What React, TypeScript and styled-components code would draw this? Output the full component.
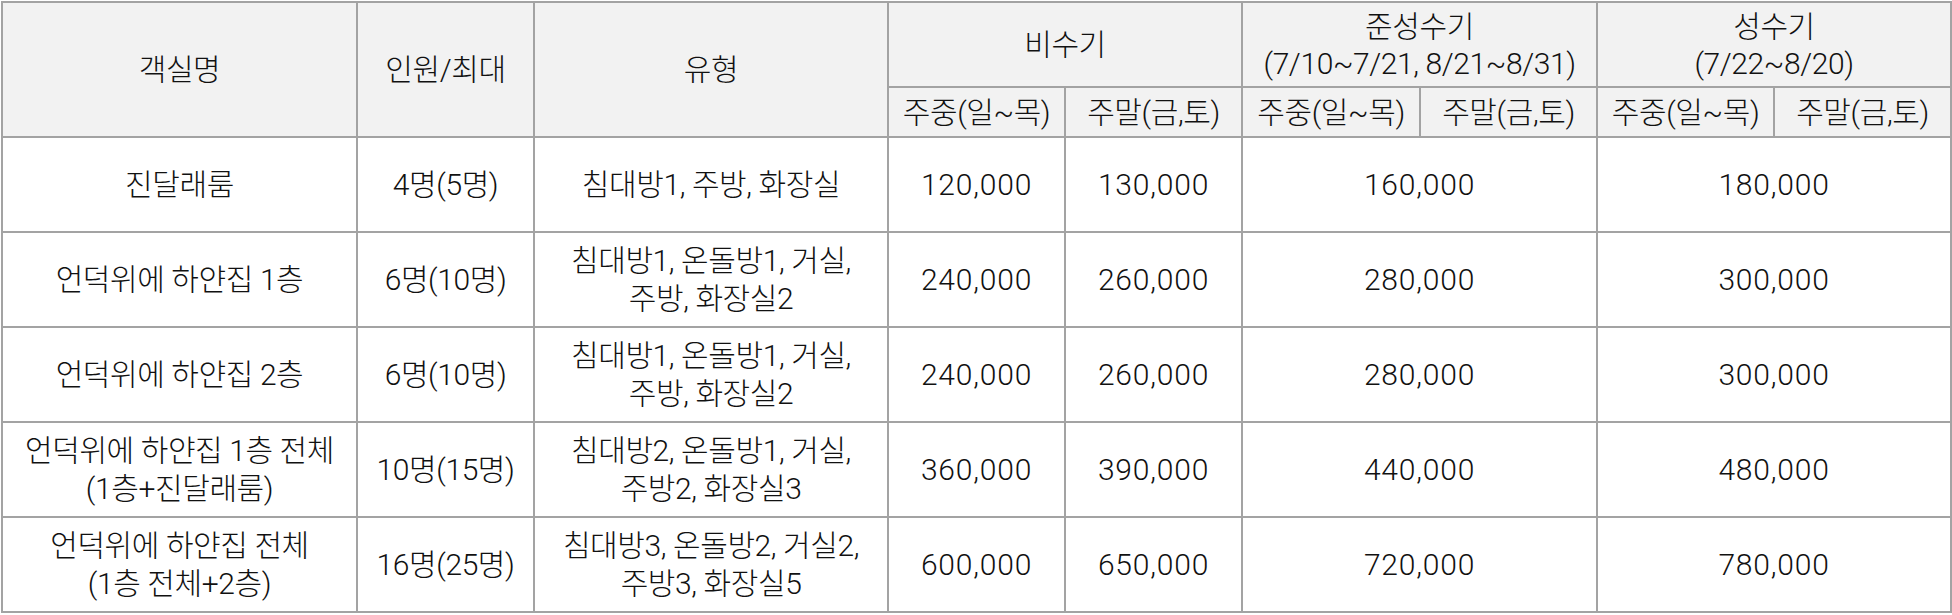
import React from 'react';
import styled, { createGlobalStyle } from 'styled-components';

const GlobalStyle = createGlobalStyle`
	html, body {
		margin: 0;
		padding: 0;
		background: #ffffff;
	}
	body {
		font-family: Roboto, 'Noto Sans CJK KR', 'Noto Sans', sans-serif;
		color: #111111;
	}
`;

interface Room {
	name: string[];
	people: string;
	type: string[];
	offWeekday: string;
	offWeekend: string;
	mid: string;
	peak: string;
}

const rooms: Room[] = [
	{
		name: ['진달래룸'],
		people: '4명(5명)',
		type: ['침대방1, 주방, 화장실'],
		offWeekday: '120,000',
		offWeekend: '130,000',
		mid: '160,000',
		peak: '180,000',
	},
	{
		name: ['언덕위에 하얀집 1층'],
		people: '6명(10명)',
		type: ['침대방1, 온돌방1, 거실,', '주방, 화장실2'],
		offWeekday: '240,000',
		offWeekend: '260,000',
		mid: '280,000',
		peak: '300,000',
	},
	{
		name: ['언덕위에 하얀집 2층'],
		people: '6명(10명)',
		type: ['침대방1, 온돌방1, 거실,', '주방, 화장실2'],
		offWeekday: '240,000',
		offWeekend: '260,000',
		mid: '280,000',
		peak: '300,000',
	},
	{
		name: ['언덕위에 하얀집 1층 전체', '(1층+진달래룸)'],
		people: '10명(15명)',
		type: ['침대방2, 온돌방1, 거실,', '주방2, 화장실3'],
		offWeekday: '360,000',
		offWeekend: '390,000',
		mid: '440,000',
		peak: '480,000',
	},
	{
		name: ['언덕위에 하얀집 전체', '(1층 전체+2층)'],
		people: '16명(25명)',
		type: ['침대방3, 온돌방2, 거실2,', '주방3, 화장실5'],
		offWeekday: '600,000',
		offWeekend: '650,000',
		mid: '720,000',
		peak: '780,000',
	},
];

const colWidths = [355, 177, 354, 177, 177, 178, 177, 177, 177];

const Lines = ({ lines }: { lines: string[] }) => (
	<>
		{lines.map((line, i) => (
			<React.Fragment key={i}>
				{i > 0 && <br />}
				{line}
			</React.Fragment>
		))}
	</>
);

const App = () => {
	return (
		<Page>
			<GlobalStyle />
			<PriceTable>
				<colgroup>
					{colWidths.map((w, i) => (
						<col key={i} style={{ width: w }} />
					))}
				</colgroup>
				<thead>
					<HeadRow height={85}>
						<HeadCell rowSpan={2}>객실명</HeadCell>
						<HeadCell rowSpan={2}>인원/최대</HeadCell>
						<HeadCell rowSpan={2}>유형</HeadCell>
						<HeadCell colSpan={2}>비수기</HeadCell>
						<HeadCell colSpan={2}>
							준성수기
							<br />
							(7/10~7/21, 8/21~8/31)
						</HeadCell>
						<HeadCell colSpan={2}>
							성수기
							<br />
							(7/22~8/20)
						</HeadCell>
					</HeadRow>
					<HeadRow height={50}>
						{[0, 1, 2].map((i) => (
							<React.Fragment key={i}>
								<HeadCell>주중(일~목)</HeadCell>
								<HeadCell>주말(금,토)</HeadCell>
							</React.Fragment>
						))}
					</HeadRow>
				</thead>
				<tbody>
					{rooms.map((room) => (
						<BodyRow key={room.name.join('')}>
							<BodyCell>
								<Lines lines={room.name} />
							</BodyCell>
							<BodyCell>{room.people}</BodyCell>
							<BodyCell>
								<Lines lines={room.type} />
							</BodyCell>
							<BodyCell price>{room.offWeekday}</BodyCell>
							<BodyCell price>{room.offWeekend}</BodyCell>
							<BodyCell price colSpan={2}>
								{room.mid}
							</BodyCell>
							<BodyCell price colSpan={2}>
								{room.peak}
							</BodyCell>
						</BodyRow>
					))}
				</tbody>
			</PriceTable>
		</Page>
	);
};

const Page = styled.div`
	padding: 1px 0 0 1px;
	width: 1952px;
	box-sizing: border-box;
`;

const PriceTable = styled.table`
	width: 1950px;
	table-layout: fixed;
	border-collapse: collapse;
	font-size: 30px;
	font-weight: 300;
	letter-spacing: -0.4px;
	line-height: 38px;
	text-align: center;
`;

const HeadRow = styled.tr<{ height: number }>`
	height: ${({ height }) => height}px;
`;

const HeadCell = styled.th`
	background: #f2f2f2;
	border: 2px solid #a3a3a3;
	font-weight: 300;
	padding: 0;
	vertical-align: middle;
	line-height: 37px;
`;

const BodyRow = styled.tr`
	height: 95px;
`;

const BodyCell = styled.td.withConfig({
	shouldForwardProp: (prop) => prop !== 'price',
})<{ price?: boolean }>`
	border: 2px solid #a3a3a3;
	padding: 0;
	vertical-align: middle;
	letter-spacing: ${({ price }) => (price ? '0.8px' : '-0.4px')};
`;

export default App;
